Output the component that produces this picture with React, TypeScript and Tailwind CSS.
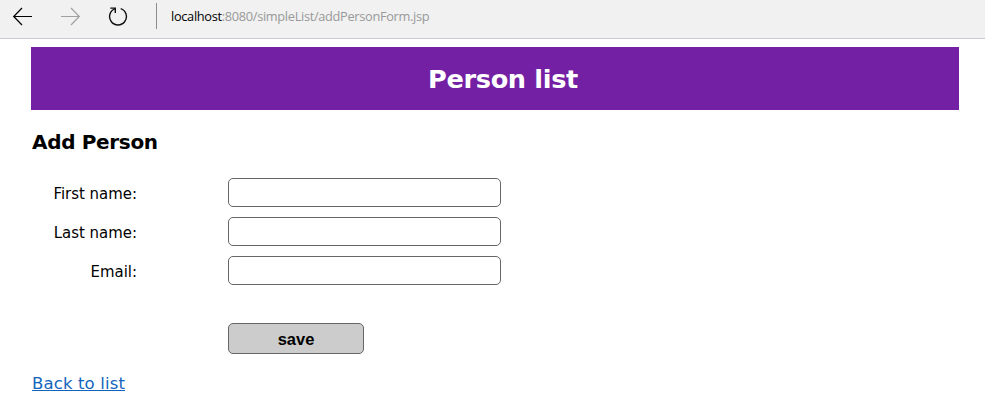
import type { ReactNode } from "react";

function Icon({ children, className }: { children: ReactNode; className: string }) {
  return (
    <svg width="22" height="22" viewBox="0 0 22 22" fill="none" strokeWidth="1.2" className={className}>
      {children}
    </svg>
  );
}

function BrowserBar() {
  return (
    <div className="flex h-[39px] items-start border-b border-[#cbc8d0] bg-[#f1f1f1] pl-3">
      <Icon className="mt-[5px] stroke-black">
        <path d="M20 11.5H1.5M10 3L1.7 11.5L10 20" />
      </Icon>
      <Icon className="mt-[5px] ml-[26px] stroke-[#a0a0a0]">
        <path d="M1 11.5H19.5M11 3L19.3 11.5L11 20" />
      </Icon>
      <Icon className="mt-[5px] ml-[26px] stroke-[#111111]">
        <path strokeWidth="1.4" d="M7.3 3.6A8.4 8.4 0 1 0 12.7 3.6" />
        <path strokeWidth="1.4" d="M2.3 3.1H7.3V8" />
      </Icon>
      <div className="mt-[3px] ml-[26px] h-[26px] w-px bg-[#8c8c8c]" />
      <div className="mt-[6px] ml-[14px] font-['Open_Sans',sans-serif] text-[12.8px] leading-5 tracking-[-0.32px] whitespace-nowrap text-[#999999]">
        <span className="text-black">localhost</span>:8080/simpleList/addPersonForm.jsp
      </div>
    </div>
  );
}

function Field({ label }: { label: string }) {
  return (
    <div className="flex h-[29px] items-center">
      <label className="w-[106px] pt-[3px] text-right font-['DejaVu_Sans_Condensed','DejaVu_Sans',sans-serif] text-[16.6px] leading-5 whitespace-nowrap [font-stretch:condensed]">
        {label}
      </label>
      <input className="ml-[91px] h-[29px] w-[273px] rounded-[5px] border border-[#666666] bg-white px-1" />
    </div>
  );
}

export default function App() {
  return (
    <div className="h-[415px] overflow-hidden bg-white font-['DejaVu_Sans',sans-serif] text-black">
      <BrowserBar />
      <main className="mt-2 ml-[31px] w-[928px]">
        <header className="flex h-[63px] items-center justify-center bg-[#7320a4] pl-4">
          <h1 className="text-[25.6px] leading-8 font-bold tracking-[-0.35px] text-white">Person list</h1>
        </header>
        <h2 className="mt-5 ml-px text-[20px] leading-6 font-bold tracking-[-0.33px]">Add Person</h2>
        <form className="mt-6" onSubmit={(e) => e.preventDefault()}>
          <div className="flex flex-col gap-[10px]">
            <Field label="First name:" />
            <Field label="Last name:" />
            <Field label="Email:" />
          </div>
          <button className="mt-[38px] ml-[197px] flex h-[31px] w-[136px] items-center justify-center rounded-[5px] border border-[#666666] bg-[#cccccc] pt-px font-['Liberation_Sans',sans-serif] text-[16.5px] leading-5 font-bold">
            save
          </button>
        </form>
        <a href="#list" className="mt-[18px] ml-px inline-block text-[16.5px] leading-6 tracking-[0.14px] text-[#1264bd] underline">
          Back to list
        </a>
      </main>
    </div>
  );
}
